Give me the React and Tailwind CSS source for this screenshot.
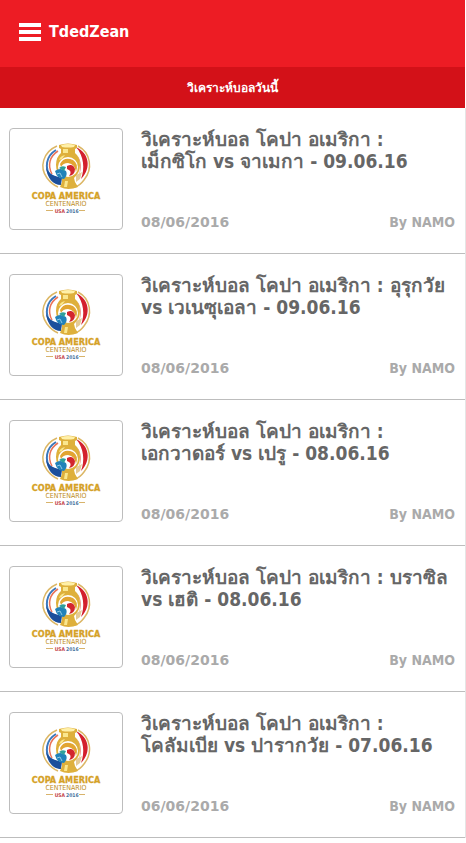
const posts = [
  { lines: ["วิเคราะห์บอล โคปา อเมริกา :", "เม็กซิโก vs จาเมกา - 09.06.16"], date: "08/06/2016" },
  { lines: ["วิเคราะห์บอล โคปา อเมริกา : อุรุกวัย", "vs เวเนซุเอลา - 09.06.16"], date: "08/06/2016" },
  { lines: ["วิเคราะห์บอล โคปา อเมริกา :", "เอกวาดอร์ vs เปรู - 08.06.16"], date: "08/06/2016" },
  { lines: ["วิเคราะห์บอล โคปา อเมริกา : บราซิล", "vs เฮติ - 08.06.16"], date: "08/06/2016" },
  { lines: ["วิเคราะห์บอล โคปา อเมริกา :", "โคลัมเบีย vs ปารากวัย - 07.06.16"], date: "06/06/2016" },
];

function CopaLogo() {
  return (
    <svg viewBox="0 0 112 100" className="block w-full" role="img" aria-label="Copa America Centenario USA 2016">
      <g fill="none">
        <path d="M47 17 C33 23 29 38 37 49 C40 53 43 56 48 58" stroke="#dcb766" strokeWidth="1.5" />
        <path d="M68 17 C81 24 83 40 74 51 C71 55 69 57 65 58" stroke="#dcb766" strokeWidth="1.5" />
        <path d="M46 21 C36 27 34 39 41 48" stroke="#3a78bd" strokeWidth="2" />
        <path d="M48 22 C40 27 37 36 42 45" stroke="#ea7358" strokeWidth="1.5" />
      </g>
      <path d="M66 18 C79 24 82 39 71 50 C75 40 74 27 66 18Z" fill="#d3202d" />
      <path d="M67 26 C72 32 72 40 69 46 C71 38 70 32 67 26Z" fill="#ef9d90" />
      <path d="M36 38 C39 46 45 47 52 49 L51 56 C43 56 37 49 36 38Z" fill="#1b4f9c" />
      <path d="M49 16 Q58 13 67 16 L67 19 L65 20 L65 24 Q70 28 70 36 Q70 44 64 49 L65 53 L68 58 Q58 62 50 58 L52 53 L52 49 Q46 44 46 36 Q46 28 51 24 L51 20 L49 19Z" fill="#deb03c" />
      <path d="M51 16 Q58 14 65 16 L64 18 Q58 19 52 18Z" fill="#fff0a8" />
      <path d="M53 20 H58 V24 H53Z M49 31 Q50 27 55 26 L52 30Z M55 52 H58 L57 58 H54Z" fill="#fae78e" />
      <circle cx="58" cy="38" r="10" fill="#fff" />
      <path d="M50 35 Q54 27 63 31 Q69 35 66 43 Q65 35 58 34 Q53 34 51 38Z" fill="#e2a532" />
      <path d="M57 37 Q63 34 65 40 Q65 46 59 47 Q63 42 57 40Z" fill="#d3262e" />
      <path d="M45 42 Q50 38 56 42 Q58 46 54 50 Q47 50 45 42Z" fill="#2182b9" />
      <path d="M49 39 Q52 36 56 38 L54 42Z" fill="#2fa09a" />
      <path d="M47 45 L50 44 L52 48" fill="none" stroke="#8fc8e5" />
      <path d="M66 46 L72 43 L70 50 L66 53Z" fill="#e4cb98" />
      <text x="56" y="70" textAnchor="middle" fontSize="9" fontWeight="700" fill="#d5a126" stroke="#d5a126" strokeWidth="0.3">COPA AMERICA</text>
      <text x="56" y="77" textAnchor="middle" fontSize="7" fontWeight="400" fill="#bd8c22">CENTENARIO</text>
      <path d="M36 81.5 H43 M69 81.5 H75" stroke="#d8b36b" />
      <text x="55" y="84" textAnchor="end" fontSize="5" fontWeight="700" fill="#c43f48">USA</text>
      <text x="56" y="84" fontSize="5" fontWeight="700" fill="#47739f">2016</text>
    </svg>
  );
}

function Post({ lines, date }) {
  return (
    <li className="flex border-b border-[#bdbdbd] pt-5 pr-2.5 pb-[23px] pl-[9px]">
      <a href="#post" className="flex flex-1 gap-[18px]">
        <div className="h-[102px] w-[114px] shrink-0 overflow-hidden rounded border border-[#bdbdbd]">
          <CopaLogo />
        </div>
        <div className="flex min-w-0 flex-1 flex-col justify-between">
          <h2 className="text-[19px] leading-[22px] whitespace-nowrap text-[#666]">
            {lines[0]}
            <br />
            {lines[1]}
          </h2>
          <div className="flex justify-between text-[14px] leading-4 text-[#aaa]">
            <time className="font-['DejaVu_Sans',sans-serif]">{date}</time>
            <span>By NAMO</span>
          </div>
        </div>
      </a>
    </li>
  );
}

export default function App() {
  return (
    <div className="min-h-screen bg-white pr-px font-['DejaVu_Sans_Condensed','Noto_Sans',sans-serif] font-bold">
      <header className="flex h-[67px] items-center bg-[#ed1c24] px-[19px] pb-1 text-white">
        <button type="button" className="flex items-center gap-2">
          <svg viewBox="0 0 22 18" className="h-[18px] w-[22px]" fill="currentColor" aria-hidden="true">
            <path d="M0 0h22v4H0zM0 7h22v4H0zM0 14h22v4H0z" />
          </svg>
          <span className="text-[16px] leading-5">TdedZean</span>
        </button>
      </header>
      <h1 className="flex h-[41px] items-center justify-center bg-[#d31118] text-[12px] text-white">วิเคราะห์บอลวันนี้</h1>
      <ul className="-mr-px border-r border-[#e5e5e5]">
        {posts.map((post) => (
          <Post key={post.lines.join(" ")} {...post} />
        ))}
      </ul>
    </div>
  );
}
